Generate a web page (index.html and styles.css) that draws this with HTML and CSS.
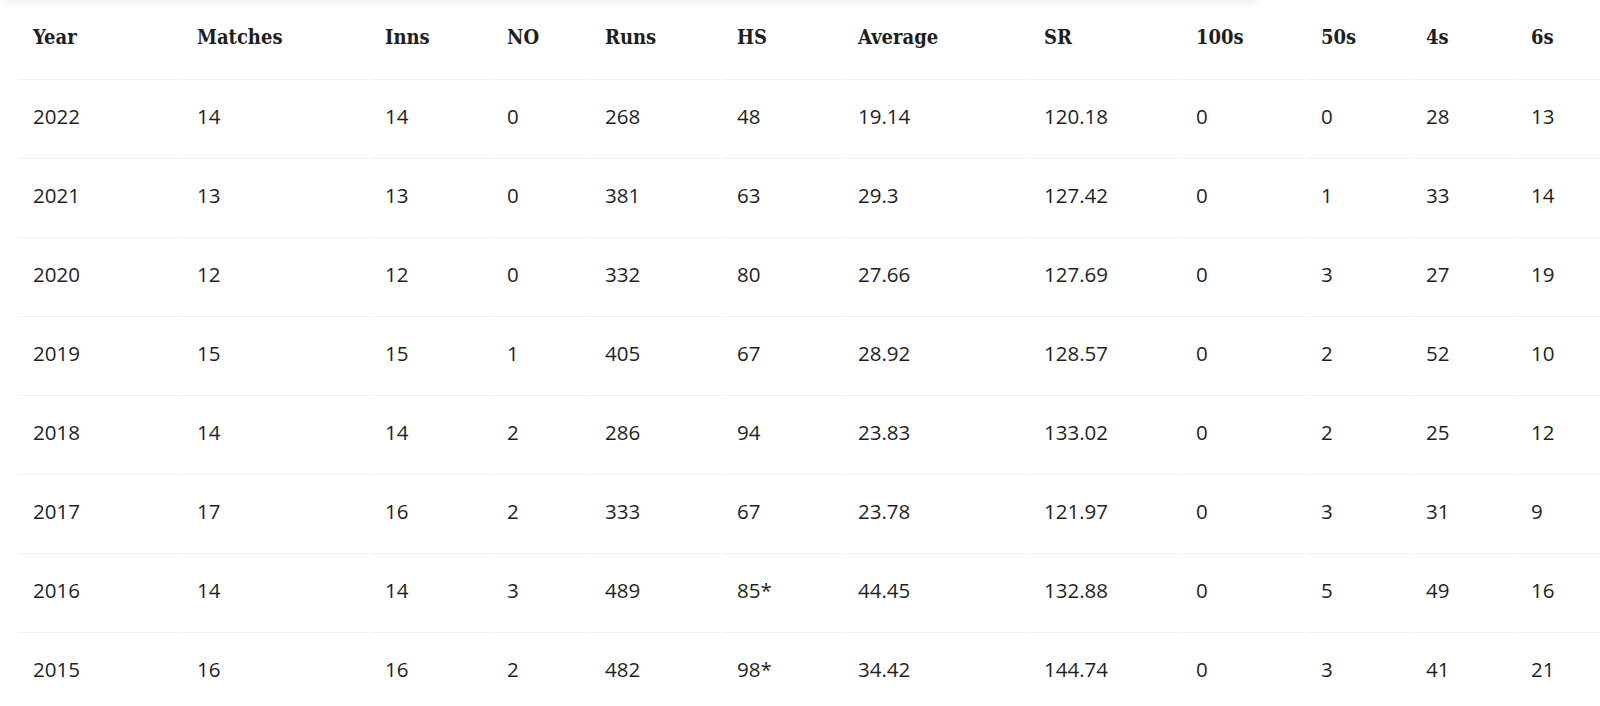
FILE: index.html
```html
<!DOCTYPE html>
<html lang="en">
<head>
<meta charset="utf-8">
<title>Season stats</title>
<link rel="stylesheet" href="styles.css">
</head>
<body>
<div class="page">
  <div class="overlay-shadow"></div>
  <table class="stats">
    <colgroup>
      <col class="c-year"><col class="c-matches"><col class="c-inns"><col class="c-no"><col class="c-runs"><col class="c-hs"><col class="c-avg"><col class="c-sr"><col class="c-100"><col class="c-50"><col class="c-4s"><col class="c-6s">
    </colgroup>
    <thead>
      <tr><th>Year</th><th>Matches</th><th>Inns</th><th>NO</th><th>Runs</th><th>HS</th><th>Average</th><th>SR</th><th>100s</th><th>50s</th><th>4s</th><th>6s</th></tr>
    </thead>
    <tbody>
      <tr><td>2022</td><td>14</td><td>14</td><td>0</td><td>268</td><td>48</td><td>19.14</td><td>120.18</td><td>0</td><td>0</td><td>28</td><td>13</td></tr>
      <tr><td>2021</td><td>13</td><td>13</td><td>0</td><td>381</td><td>63</td><td>29.3</td><td>127.42</td><td>0</td><td>1</td><td>33</td><td>14</td></tr>
      <tr><td>2020</td><td>12</td><td>12</td><td>0</td><td>332</td><td>80</td><td>27.66</td><td>127.69</td><td>0</td><td>3</td><td>27</td><td>19</td></tr>
      <tr><td>2019</td><td>15</td><td>15</td><td>1</td><td>405</td><td>67</td><td>28.92</td><td>128.57</td><td>0</td><td>2</td><td>52</td><td>10</td></tr>
      <tr><td>2018</td><td>14</td><td>14</td><td>2</td><td>286</td><td>94</td><td>23.83</td><td>133.02</td><td>0</td><td>2</td><td>25</td><td>12</td></tr>
      <tr><td>2017</td><td>17</td><td>16</td><td>2</td><td>333</td><td>67</td><td>23.78</td><td>121.97</td><td>0</td><td>3</td><td>31</td><td>9</td></tr>
      <tr><td>2016</td><td>14</td><td>14</td><td>3</td><td>489</td><td>85*</td><td>44.45</td><td>132.88</td><td>0</td><td>5</td><td>49</td><td>16</td></tr>
      <tr><td>2015</td><td>16</td><td>16</td><td>2</td><td>482</td><td>98*</td><td>34.42</td><td>144.74</td><td>0</td><td>3</td><td>41</td><td>21</td></tr>
    </tbody>
  </table>
</div>
</body>
</html>
```

FILE: styles.css
```css
html, body {
  margin: 0;
  padding: 0;
  background: #ffffff;
  overflow: hidden;
}

.page {
  position: relative;
  width: 1600px;
  height: 706px;
  overflow: hidden;
}

.overlay-shadow {
  position: absolute;
  left: 0;
  top: -20px;
  width: 1262px;
  height: 20px;
  background: #ffffff;
  box-shadow: 0 1px 8px rgba(0, 0, 0, 0.10);
  border-radius: 0 0 12px 12px;
  z-index: 2;
}

.stats {
  margin-left: 16px;
  width: 1622px;
  table-layout: fixed;
  border-collapse: separate;
  border-spacing: 2px 0;
  color: #1f1f1f;
}

.c-year { width: 162px; }
.c-matches { width: 186px; }
.c-inns { width: 120px; }
.c-no { width: 96px; }
.c-runs { width: 130px; }
.c-hs { width: 119px; }
.c-avg { width: 184px; }
.c-sr { width: 150px; }
.c-100 { width: 123px; }
.c-50 { width: 103px; }
.c-4s { width: 103px; }
.c-6s { width: 120px; }

.stats th,
.stats td {
  padding: 0 0 6px 15px;
  text-align: left;
  vertical-align: middle;
  border-bottom: 1px solid #efefef;
  white-space: nowrap;
}

.stats th {
  height: 73px;
  font-family: "DejaVu Serif Condensed", "DejaVu Serif", serif;
  font-stretch: condensed;
  font-weight: bold;
  font-size: 20px;
  color: #1e1e1e;
}

.stats td {
  height: 72px;
  font-family: "Open Sans", "Noto Sans", sans-serif;
  font-size: 20.5px;
  font-weight: 400;
}
```
